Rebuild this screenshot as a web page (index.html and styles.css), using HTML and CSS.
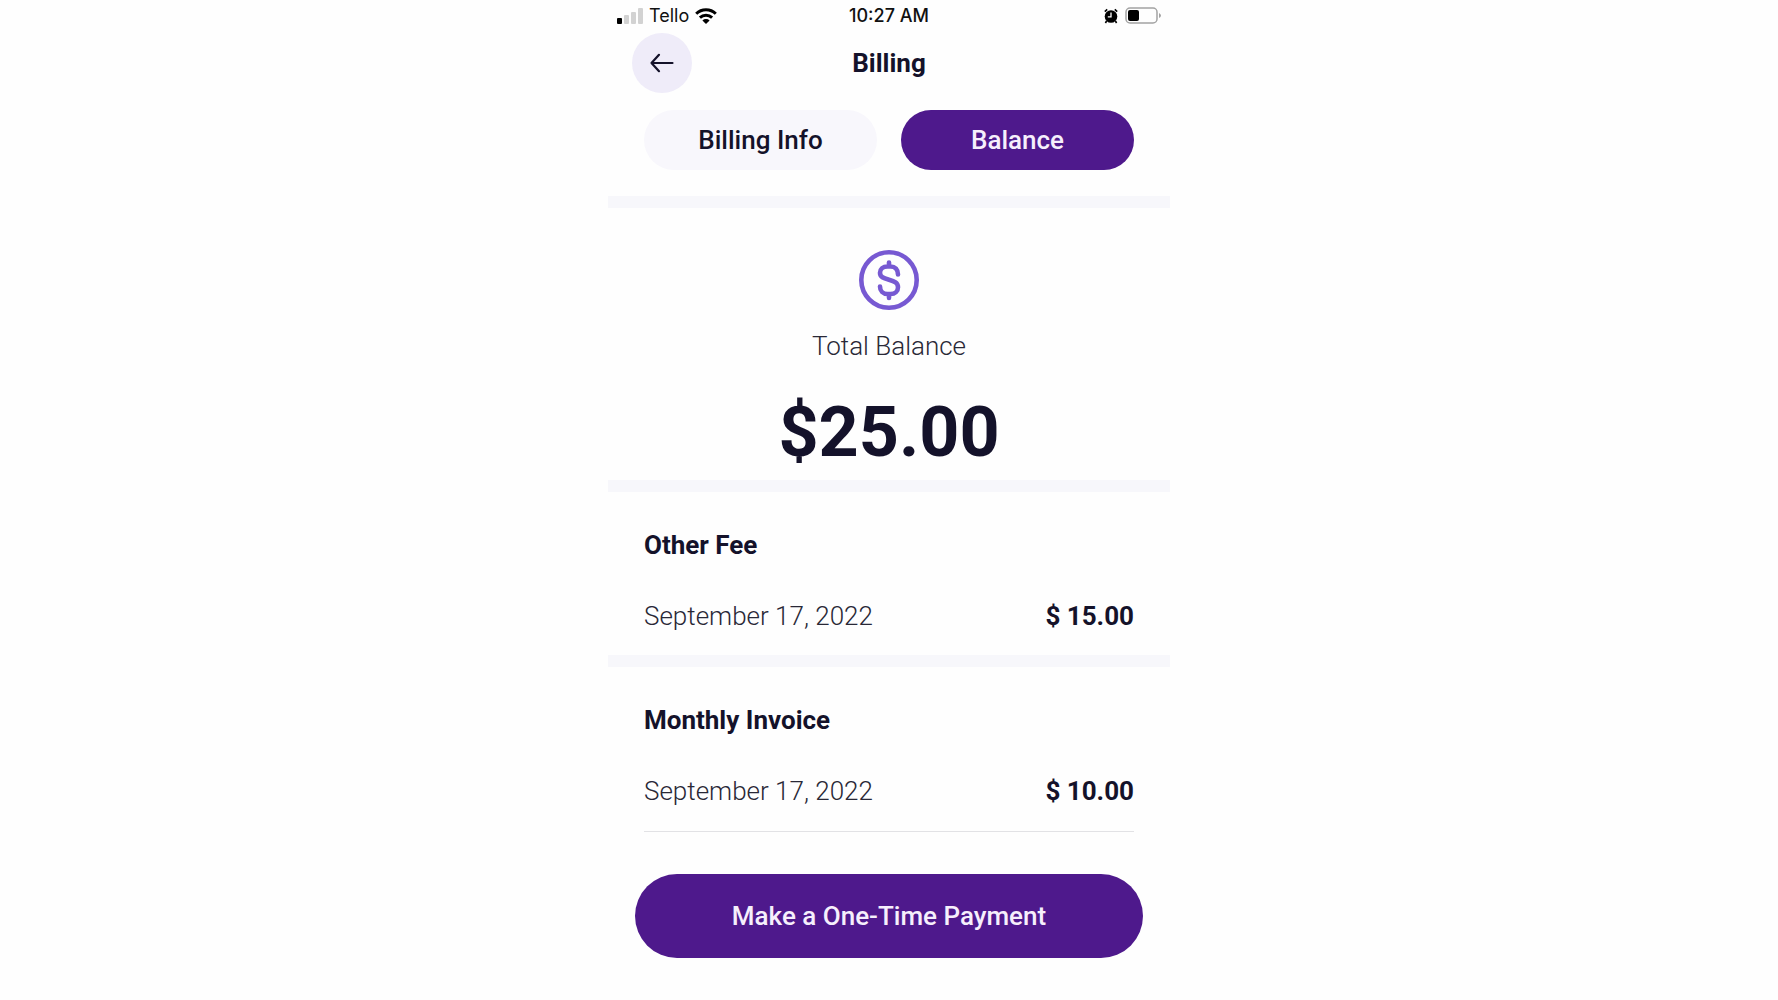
FILE: index.html
```html
<!DOCTYPE html>
<html lang="en">
	<head>
		<meta charset="UTF-8" />
		<meta name="viewport" content="width=device-width, initial-scale=1.0" />
		<title>Billing</title>
		<link rel="stylesheet" href="styles.css">
	</head>
	<body>
		<div class="phone">
			<div class="status-bar">
				<div class="carrier">
					<svg width="26" height="16" viewBox="0 0 26 16">
						<rect x="0" y="10" width="5" height="6" rx="1" fill="#000" />
						<rect x="7" y="7" width="5" height="9" rx="1" fill="#d2d2d2" />
						<rect x="14" y="4" width="5" height="12" rx="1" fill="#d2d2d2" />
						<rect x="21" y="0" width="5" height="16" rx="1" fill="#d2d2d2" />
					</svg>
					<span>Tello</span>
					<svg width="22" height="16" viewBox="0 0 22 16" fill="none" stroke="#000" stroke-width="3">
						<path d="M1.2 5.8a14 14 0 0 1 19.6 0" />
						<path d="M4.9 9.7a8.8 8.8 0 0 1 12.2 0" />
						<path d="M11 16l-3.6-3.6a5.1 5.1 0 0 1 7.2 0z" fill="#000" stroke="none" />
					</svg>
				</div>
				<div class="time">10:27 AM</div>
				<div class="indicators">
					<svg width="14" height="16" viewBox="0 0 14 16">
						<circle cx="7" cy="8.5" r="6.3" />
						<path d="M0.8 3.6L3.2 1.4M13.2 3.6L10.8 1.4M2.6 13l-1.2 2M11.4 13l1.2 2" stroke="#000" stroke-width="1.6" />
						<path d="M7 4.6v4.2H3.8" fill="none" stroke="#fff" stroke-width="1.3" />
					</svg>
					<svg width="36" height="18" viewBox="0 0 36 18">
						<rect x="1" y="1" width="31" height="15" rx="4" fill="none" stroke="#a3a3a3" stroke-width="1.5" />
						<rect x="3" y="3" width="11" height="11" rx="2" />
						<path d="M34 6v5q2-1 2-2.500t-2-2.500z" fill="#a3a3a3" />
					</svg>
				</div>
			</div>

			<header class="header">
				<button class="back" type="button" aria-label="Back">
					<svg width="24" height="20" viewBox="0 0 24 20" fill="none" stroke="#14122a" stroke-width="2.2" stroke-linecap="round" stroke-linejoin="round">
						<path d="M22.500 10H1.500M9 1.800L1.500 10L9 18.200" />
					</svg>
				</button>
				<h1>Billing</h1>
			</header>

			<nav class="tabs">
				<button type="button">Billing Info</button>
				<button class="active" type="button">Balance</button>
			</nav>

			<section class="total">
				<svg width="60" height="60" viewBox="0 0 60 60" fill="none" stroke="#7759d2" stroke-width="4.600" stroke-linecap="round">
					<circle cx="30" cy="30" r="27.700" />
					<path d="M39 24.500c0-5-3-8-7.500-8h-3c-4.500 0-7.500 2.500-7.500 6.300 0 4.200 3.500 5.400 9 6.900s9 3 9 7.500c0 4-3 6.800-7.500 6.800h-3c-4.500 0-7.500-3-7.500-7.500M30 12.500v3.500M30 44.500v3.500" />
				</svg>
				<p>Total Balance</p>
				<div class="amount">$25.00</div>
			</section>

			<section class="entry">
				<h2>Other Fee</h2>
				<div class="row">
					<span>September 17, 2022</span>
					<strong>$ 15.00</strong>
				</div>
			</section>

			<section class="entry last">
				<h2>Monthly Invoice</h2>
				<div class="row">
					<span>September 17, 2022</span>
					<strong>$ 10.00</strong>
				</div>
			</section>

			<button class="pay" type="button">Make a One-Time Payment</button>
		</div>
	</body>
</html>
```
FILE: styles.css
```css
* {
	box-sizing: border-box;
}

body,
h1,
h2,
p {
	margin: 0;
	padding: 0;
}

body {
	background-color: #fefefe;
	color: #14122a;
	font-family: Roboto, Arial, sans-serif;
	font-size: 26px;
	line-height: 30px;
}

button {
	border: none;
	padding: 0;
	color: inherit;
	font: inherit;
	font-weight: 500;
	cursor: pointer;
}

svg {
	display: block;
}

.phone {
	max-width: 562px;
	margin: 0 auto;
	display: flex;
	flex-direction: column;
}

.status-bar {
	display: grid;
	grid-template-columns: 1fr auto 1fr;
	align-items: center;
	height: 33px;
	padding: 0 9px 2px;
	font-family: Inter, Arial, sans-serif;
	font-size: 18px;
	color: #111;
}

.carrier,
.indicators {
	display: flex;
	align-items: center;
	gap: 7px;
}

.carrier {
	gap: 6px;
}

.indicators {
	justify-content: flex-end;
}

.time {
	font-weight: 500;
}

.header {
	display: grid;
	grid-template-columns: 60px 1fr 60px;
	align-items: center;
	padding: 0 24px;
	text-align: center;
}

.back {
	display: flex;
	align-items: center;
	justify-content: center;
	width: 60px;
	height: 60px;
	border-radius: 50%;
	background-color: #efecf9;
}

h1,
h2 {
	font-size: 26px;
	font-weight: 700;
}

.tabs {
	display: grid;
	grid-template-columns: 1fr 1fr;
	gap: 24px;
	padding: 17px 36px 26px;
}

.tabs button {
	height: 60px;
	border-radius: 30px;
	background-color: #f8f7fc;
}

.tabs .active {
	background-color: #4e198c;
	color: #f6effc;
}

.total,
.entry {
	border-top: 12px solid #f7f7fb;
}

.total {
	display: flex;
	flex-direction: column;
	align-items: center;
	padding: 42px 36px 8px;
}

.total p {
	margin: 21px 0 31px;
}

.total p,
.row span {
	color: #292836;
	font-weight: 300;
}

.amount {
	font-size: 70px;
	font-weight: 700;
	line-height: 80px;
}

.entry {
	padding: 38px 36px 24px;
}

.row {
	display: flex;
	justify-content: space-between;
	margin-top: 41px;
}

.row strong {
	font-weight: 700;
}

.last .row {
	padding-bottom: 25px;
	border-bottom: 1px solid #e2e2e5;
}

.pay {
	height: 84px;
	margin: 18px 27px 0;
	border-radius: 42px;
	background-color: #4e198c;
	color: #f6effc;
}
```
